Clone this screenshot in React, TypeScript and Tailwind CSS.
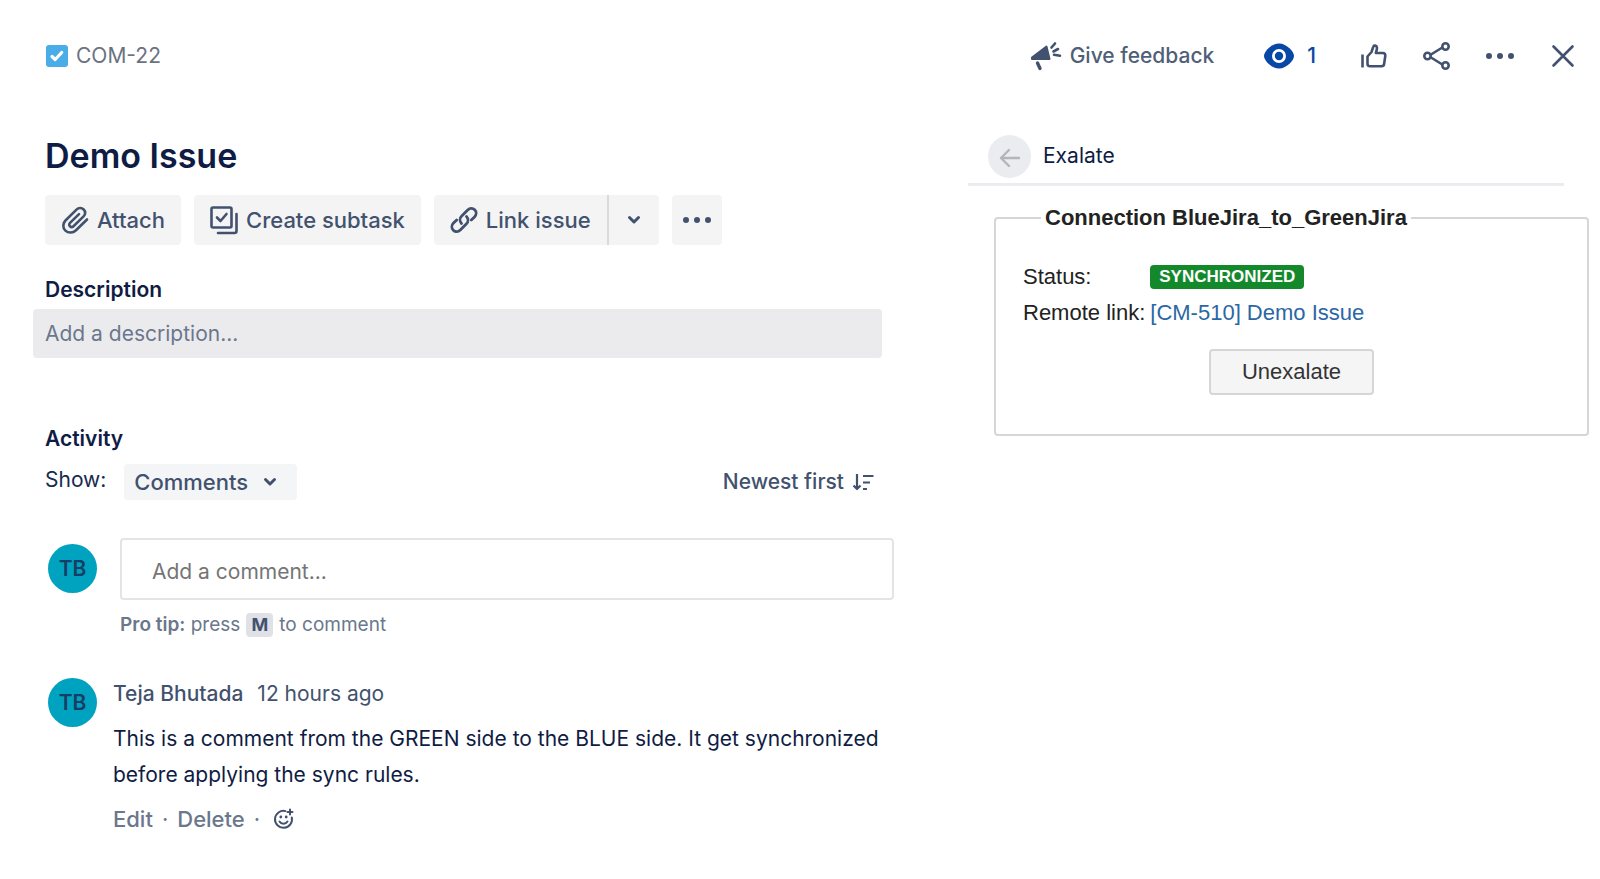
import React, { useState } from 'react';

const Svg = ({ w, h, children }: { w: number; h: number; children: React.ReactNode }) => (
  <svg
    width={w}
    height={h}
    viewBox={`0 0 ${w} ${h}`}
    fill="none"
    stroke="currentColor"
    strokeWidth={2.6}
    strokeLinecap="round"
    strokeLinejoin="round"
    className="shrink-0"
    aria-hidden="true"
  >
    {children}
  </svg>
);

const TaskIcon = () => (
  <Svg w={22} h={22}>
    <rect width="22" height="22" rx="3" fill="#4bade8" stroke="none" />
    <path d="M6 11.5l3.2 3 6.5-7" stroke="#fff" strokeWidth="3.2" />
  </Svg>
);

const MegaphoneIcon = () => (
  <Svg w={32} h={32}>
    <path d="M2 17.5L16.5 6.5l3 12.5L2 19z" fill="currentColor" strokeWidth="2" />
    <path d="M7.5 23l2.5 5.500" strokeWidth="3.4" />
    <path d="M21.5 7.5l3.500-4M23.5 11.5l4.500-2.500M24 14.7l6 1" strokeWidth="2.6" />
  </Svg>
);

const EyeIcon = () => (
  <Svg w={32} h={28}>
    <path d="M16 1.5C8 1.5 1 10 1 14s7 12.5 15 12.5S31 18 31 14 24 1.5 16 1.5z" fill="currentColor" stroke="none" />
    <circle cx="16" cy="14" r="5.6" stroke="#fff" strokeWidth="2.8" />
  </Svg>
);

const ThumbIcon = () => (
  <Svg w={32} h={32}>
    <path d="M4.5 14.5v13" strokeLinecap="butt" />
    <path d="M9.5 16.5l4-4.5 1.7-5.2c.5-1.8 3.6-1.6 3.8.8.1 1.6-.6 3.5-1.2 5.4H25c1.6 0 2.5 1.3 2.3 2.7l-1.2 8.3c-.2 1.4-1.2 2.2-2.5 2.2H12c-1.5 0-2.5-1-2.5-2.5z" />
  </Svg>
);

const ShareIcon = () => (
  <Svg w={32} h={32}>
    <path d="M10 14.5L20.5 8M10 17.5L20.5 24" />
    <circle cx="6.5" cy="16" r="3.2" />
    <circle cx="24.5" cy="6.5" r="3.2" />
    <circle cx="24.5" cy="25.5" r="3.2" />
  </Svg>
);

const DotsIcon = () => (
  <Svg w={32} h={32}>
    <g fill="currentColor" stroke="none">
      <circle cx="5" cy="16" r="3" />
      <circle cx="16" cy="16" r="3" />
      <circle cx="27" cy="16" r="3" />
    </g>
  </Svg>
);

const CloseIcon = () => (
  <Svg w={32} h={32}>
    <path d="M6.5 6.5l19 19M25.5 6.5l-19 19" />
  </Svg>
);

const ClipIcon = () => (
  <Svg w={28} h={30}>
    <path d="M26 14.5L15 25.2c-3 2.9-7.6 3.2-10.6.4-3-2.9-2.7-7.5.3-10.4L15.5 4.6c2-1.9 5.2-2 7.2-.1s1.9 5-.1 6.9L12.5 21.2c-1 1-2.6 1-3.6.1-.9-.9-.9-2.5.1-3.5l9-8.7" />
  </Svg>
);

const SubtaskIcon = () => (
  <Svg w={28} h={30}>
    <rect x="1.5" y="2.5" width="20" height="20" rx="1.5" />
    <path d="M7 12.5l3.5 3.5 6-7M8 28h16.5c1.3 0 2-.7 2-2V9" />
  </Svg>
);

const LinkIcon = () => (
  <Svg w={28} h={28}>
    <g strokeWidth="2.8">
      <path d="M11.5 17.5c-2-2.2-2-5.4.2-7.5l6-6c2.1-2.1 5-2.2 7-.2s1.9 5-.2 7.1l-3.2 3.2" />
      <path d="M16.5 10.5c2 2.2 2 5.4-.2 7.5l-6 6c-2.1 2.1-5 2.2-7 .2s-1.9-5 .2-7.1l3.2-3.2" />
    </g>
  </Svg>
);

const ChevronIcon = () => (
  <Svg w={14} h={10}>
    <path d="M2.5 2.5L7 7l4.5-4.5" strokeWidth="3" />
  </Svg>
);

const SortIcon = () => (
  <Svg w={22} h={20}>
    <g strokeWidth="2.2" strokeLinecap="butt">
      <path d="M5 2v15M1.5 13.5L5 17l3.5-3.5" />
      <path d="M11 4h10.5M11 10.5h7M11 17h4" />
    </g>
  </Svg>
);

const BackIcon = () => (
  <Svg w={24} h={22}>
    <path d="M21 12H3M11 4l-8 8 8 8" strokeWidth="2.4" />
  </Svg>
);

const EmojiIcon = () => (
  <Svg w={22} h={22}>
    <g strokeWidth="2">
      <path d="M12.5 3.1A8.5 8.5 0 1 0 18.8 9.5" />
      <path d="M6.5 13.5c1.8 3 6.2 3 8 0" />
      <path d="M17 1.5v5M14.5 4h5" />
    </g>
    <circle cx="7.8" cy="9" r="1.4" fill="currentColor" stroke="none" />
    <circle cx="13.2" cy="9" r="1.4" fill="currentColor" stroke="none" />
  </Svg>
);

const Avatar = () => (
  <div className="flex size-[49px] shrink-0 items-center justify-center rounded-full bg-[#00a3bf] text-[21px] font-semibold text-[#173f66]">
    TB
  </div>
);

const headerActions = [
  { icon: ThumbIcon, label: 'Like' },
  { icon: ShareIcon, label: 'Share' },
  { icon: DotsIcon, label: 'More' },
  { icon: CloseIcon, label: 'Close' },
];

const actionButton = 'flex h-[50px] items-center bg-[#f4f4f5] text-[22px] font-medium';

const Header = () => (
  <header className="flex h-8 items-center justify-between pr-[21px] pl-[46px]">
    <a href="#" className="flex items-center gap-2 text-[#6b7280]">
      <TaskIcon />
      COM-22
    </a>
    <div className="flex items-center gap-[31px]">
      <button className="mr-[18px] flex items-center gap-2 font-medium text-[#505f79]">
        <span className="text-[#42526e]"><MegaphoneIcon /></span>
        Give feedback
      </button>
      <button className="mr-[11px] flex items-center gap-3 font-medium text-[#0747a6]" aria-label="Watchers">
        <EyeIcon />1
      </button>
      {headerActions.map((action) => (
        <button key={action.label} aria-label={action.label}>
          <action.icon />
        </button>
      ))}
    </div>
  </header>
);

const Toolbar = () => (
  <div className="mt-[19px] flex gap-[13px]">
    <button className={`${actionButton} gap-2 rounded px-4`}>
      <ClipIcon />
      Attach
    </button>
    <button className={`${actionButton} gap-2 rounded px-4`}>
      <SubtaskIcon />
      Create subtask
    </button>
    <div className="flex">
      <button className={`${actionButton} gap-2 rounded-l border-r-2 border-[#d9dadd] px-4`}>
        <LinkIcon />
        Link issue
      </button>
      <button className={`${actionButton} w-[50px] justify-center rounded-r`} aria-label="More link options">
        <ChevronIcon />
      </button>
    </div>
    <button className={`${actionButton} w-[50px] justify-center rounded`} aria-label="More actions">
      <DotsIcon />
    </button>
  </div>
);

const Activity = () => {
  const [filter, setFilter] = useState('Comments');

  return (
    <section className="mt-[67px]">
      <h2 className="pl-3 font-semibold text-[#0f1c44]">Activity</h2>
      <div className="mt-[11px] flex items-center justify-between pr-2 pl-3">
        <div className="flex items-center gap-[18px]">
          <label htmlFor="filter" className="pb-1 text-[#172b4d]">Show:</label>
          <div className="relative flex items-center">
            <select
              id="filter"
              value={filter}
              onChange={(e) => setFilter(e.target.value)}
              className="h-9 w-[173px] appearance-none rounded-sm bg-[#f4f5f7] pl-[10px] text-[22px] font-medium text-[#42526e]"
            >
              <option>Comments</option>
              <option>History</option>
            </select>
            <span className="pointer-events-none absolute right-5"><ChevronIcon /></span>
          </div>
        </div>
        <button className="flex items-center gap-2 font-medium text-[#42526e]">
          Newest first
          <SortIcon />
        </button>
      </div>

      <div className="mt-[38px] -mr-3 flex gap-[23px] pl-[15px]">
        <div className="mt-[6px]"><Avatar /></div>
        <div className="flex-1">
          <input
            aria-label="Add a comment"
            placeholder="Add a comment..."
            className="block h-[62px] w-full rounded border-2 border-[#e3e4e8] px-[30px] pt-1 placeholder:text-[#757575]"
          />
          <p className="mt-[13px] flex h-6 items-center text-[19px] text-[#6b778c]">
            <span><b className="font-semibold">Pro tip:</b> press</span>
            <kbd className="mx-[6px] flex h-6 w-[27px] items-center justify-center rounded-sm bg-[#dfe1e6] font-[Inter,sans-serif] text-[18px] font-bold text-[#42526e]">
              M
            </kbd>
            to comment
          </p>
        </div>
      </div>

      <article className="mt-[41px] flex gap-4 pl-[15px]">
        <Avatar />
        <div className="flex-1">
          <div className="flex gap-[14px] leading-8 text-[#42526e]">
            <span className="font-medium">Teja Bhutada</span>
            <span>12 hours ago</span>
          </div>
          <p className="mt-[11px] leading-9 text-[#0f1c44]">
            This is a comment from the GREEN side to the BLUE side. It get synchronized before applying the sync rules.
          </p>
          <div className="mt-3 flex items-center gap-[9px] text-[22px] text-[#6b778c]">
            <button className="font-medium">Edit</button>
            <span>·</span>
            <button className="font-medium">Delete</button>
            <span>·</span>
            <button className="pl-1 text-[#42526e]" aria-label="Add reaction"><EmojiIcon /></button>
          </div>
        </div>
      </article>
    </section>
  );
};

const ExalatePanel = () => (
  <aside className="pl-[86px]">
    <div className="mr-9 flex items-center gap-3 border-b-3 border-[#ebecf0] pb-[5px] pl-5">
      <button className="flex size-[43px] items-center justify-center rounded-full bg-[#ebecf0] text-[#b3b5bd]" aria-label="Back">
        <BackIcon />
      </button>
      <h2 className="pb-[2px] text-[#0f1c44]">Exalate</h2>
    </div>
    <fieldset className="mt-4 mr-[11px] ml-[26px] rounded border-2 border-[#d6d6d9] px-[27px] pb-[39px] font-['Liberation_Sans',Arial,sans-serif] text-[22px] text-[#222]">
      <legend className="ml-[18px] px-1 font-bold leading-8">Connection BlueJira_to_GreenJira</legend>
      <dl className="mt-[25px] grid grid-cols-[auto_1fr] items-center gap-x-[5px] leading-9">
        <dt>Status:</dt>
        <dd className="flex">
          <span className="rounded bg-[#14892c] px-[9px] text-[17px] leading-6 font-bold text-white">SYNCHRONIZED</span>
        </dd>
        <dt>Remote link:</dt>
        <dd>
          <a href="#" className="text-[#2a67a5]">[CM-510] Demo Issue</a>
        </dd>
      </dl>
      <button className="mx-auto mt-[18px] block h-[46px] rounded border-2 border-[#d6d6d9] bg-[#f5f5f5] px-[31px] text-[#333]">
        Unexalate
      </button>
    </fieldset>
  </aside>
);

export default function App() {
  return (
    <div className="bg-white pt-10 pb-8 font-[Inter,sans-serif] text-[21px] leading-7 text-[#42526e]">
      <Header />
      <div className="mt-[63px] grid grid-cols-[882fr_718fr]">
        <main className="pl-[33px]">
          <div className="pt-px pl-3">
            <h1 className="text-[34px] leading-10 font-semibold text-[#0f1c44]">Demo Issue</h1>
            <Toolbar />
          </div>
          <label htmlFor="description" className="mt-[31px] block pl-3 font-semibold text-[#0f1c44]">Description</label>
          <input
            id="description"
            placeholder="Add a description..."
            className="mt-[5px] block h-[49px] w-full rounded bg-[#ebebee] px-3 placeholder:text-[#6b778c]"
          />
          <Activity />
        </main>
        <ExalatePanel />
      </div>
    </div>
  );
}
